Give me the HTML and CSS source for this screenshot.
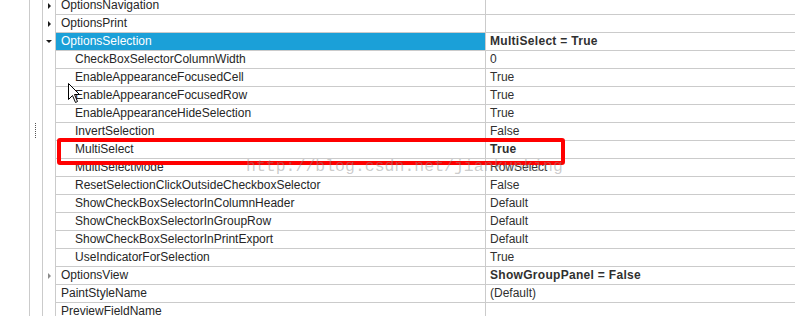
FILE: index.html
```html
<!DOCTYPE html>
<html lang="en">

<head>
    <meta charset="UTF-8">
    <title>Property Grid - OptionsSelection</title>
    <link rel="stylesheet" href="styles.css">
</head>

<body>
    <div class="editor">
        <div class="side">
            <div class="rail rail-outer"></div>
            <div class="rail rail-inner">
                <div class="splitter"></div>
            </div>
        </div>
        <div class="grid">
            <div class="row">
                <div class="expander"><span class="arrow-right"></span></div>
                <div class="name">OptionsNavigation</div>
                <div class="value"></div>
            </div>
            <div class="row">
                <div class="expander"><span class="arrow-right"></span></div>
                <div class="name">OptionsPrint</div>
                <div class="value"></div>
            </div>
            <div class="row">
                <div class="expander"><span class="arrow-down"></span></div>
                <div class="name selected">OptionsSelection</div>
                <div class="value bold">MultiSelect = True</div>
            </div>
            <div class="row">
                <div class="expander"></div>
                <div class="name child">CheckBoxSelectorColumnWidth</div>
                <div class="value">0</div>
            </div>
            <div class="row">
                <div class="expander"></div>
                <div class="name child">EnableAppearanceFocusedCell</div>
                <div class="value">True</div>
            </div>
            <div class="row">
                <div class="expander"></div>
                <div class="name child">EnableAppearanceFocusedRow</div>
                <div class="value">True</div>
            </div>
            <div class="row">
                <div class="expander"></div>
                <div class="name child">EnableAppearanceHideSelection</div>
                <div class="value">True</div>
            </div>
            <div class="row">
                <div class="expander"></div>
                <div class="name child">InvertSelection</div>
                <div class="value">False</div>
            </div>
            <div class="row">
                <div class="expander"></div>
                <div class="name child">MultiSelect</div>
                <div class="value bold">True</div>
            </div>
            <div class="row">
                <div class="expander"></div>
                <div class="name child">MultiSelectMode</div>
                <div class="value">RowSelect</div>
            </div>
            <div class="row">
                <div class="expander"></div>
                <div class="name child">ResetSelectionClickOutsideCheckboxSelector</div>
                <div class="value">False</div>
            </div>
            <div class="row">
                <div class="expander"></div>
                <div class="name child">ShowCheckBoxSelectorInColumnHeader</div>
                <div class="value">Default</div>
            </div>
            <div class="row">
                <div class="expander"></div>
                <div class="name child">ShowCheckBoxSelectorInGroupRow</div>
                <div class="value">Default</div>
            </div>
            <div class="row">
                <div class="expander"></div>
                <div class="name child">ShowCheckBoxSelectorInPrintExport</div>
                <div class="value">Default</div>
            </div>
            <div class="row">
                <div class="expander"></div>
                <div class="name child">UseIndicatorForSelection</div>
                <div class="value">True</div>
            </div>
            <div class="row">
                <div class="expander"><span class="arrow-right hover"></span></div>
                <div class="name">OptionsView</div>
                <div class="value bold">ShowGroupPanel = False</div>
            </div>
            <div class="row">
                <div class="expander"></div>
                <div class="name">PaintStyleName</div>
                <div class="value">(Default)</div>
            </div>
            <div class="row">
                <div class="expander"></div>
                <div class="name">PreviewFieldName</div>
                <div class="value"></div>
            </div>
        </div>
    </div>

    <!-- overlays from the screenshot: highlight box, watermark, mouse cursor -->
    <div class="highlight"></div>
    <div class="watermark">http://blog.csdn.net/jiankunking</div>
    <svg class="cursor" width="13" height="21" viewBox="0 0 13 21">
        <path d="M0.5 0.5 L0.5 16.5 L4.5 12.5 L7.5 19.5 L9.5 18.5 L6.5 11.5 L11.5 11.5 Z"
            fill="#ffffff" stroke="#000000" stroke-width="1" stroke-linejoin="miter" />
    </svg>
</body>

</html>
```

FILE: styles.css
```css
:root {
    --line-color: #cbcbcb;
    --select-color: #1ba0d8;
    --text-color: #262626;
}

body {
    margin: 0;
    background-color: #ffffff;
    color: var(--text-color);
    font-family: "Liberation Sans", Arial, sans-serif;
    font-size: 12px;
    overflow: hidden;
}

.editor {
    display: flex;
    margin-top: -3px;
}

.side {
    display: flex;
    flex-shrink: 0;
}

.rail {
    box-sizing: border-box;
    border-right: 1px solid var(--line-color);
}

.rail-outer {
    width: 30px;
}

.rail-inner {
    width: 13px;
}

.splitter {
    width: 0;
    height: 15px;
    margin-top: 126px;
    margin-left: 5px;
    border-left: 1px dotted #555555;
}

.grid {
    flex: 1;
}

.row {
    display: grid;
    grid-template-columns: 12px 431px 1fr;
    height: 18px;
}

.expander {
    display: flex;
    align-items: center;
    justify-content: center;
    padding-bottom: 1px;
    box-sizing: border-box;
}

.arrow-right {
    width: 0;
    height: 0;
    margin-left: 1px;
    border-top: 3px solid transparent;
    border-bottom: 3px solid transparent;
    border-left: 3px solid #1a1a1a;
}

.arrow-right.hover {
    border-left-color: #8a8a8a;
}

.arrow-down {
    width: 0;
    height: 0;
    border-left: 3px solid transparent;
    border-right: 3px solid transparent;
    border-top: 3px solid #1a1a1a;
}

.name,
.value {
    box-sizing: border-box;
    height: 18px;
    line-height: 17px;
    border-bottom: 1px solid var(--line-color);
    white-space: nowrap;
    overflow: hidden;
}

.name {
    padding-left: 5px;
    border-left: 1px solid var(--line-color);
    border-right: 1px solid var(--line-color);
}

.name.child {
    padding-left: 19px;
}

.name.selected {
    background-color: var(--select-color);
    color: #ffffff;
}

.value {
    padding-left: 4px;
    color: #303030;
}

.value.bold {
    font-weight: bold;
    letter-spacing: 0.3px;
}

.highlight {
    position: absolute;
    left: 57px;
    top: 138px;
    width: 508px;
    height: 27px;
    box-sizing: border-box;
    border: 4px solid #ff0000;
    border-radius: 3px;
}

.watermark {
    position: absolute;
    left: 246px;
    top: 157px;
    font-family: "Liberation Mono", "Courier New", monospace;
    font-size: 16.5px;
    line-height: 20px;
    color: rgba(140, 140, 140, 0.45);
    white-space: nowrap;
}

.cursor {
    position: absolute;
    left: 68px;
    top: 83px;
}
```
